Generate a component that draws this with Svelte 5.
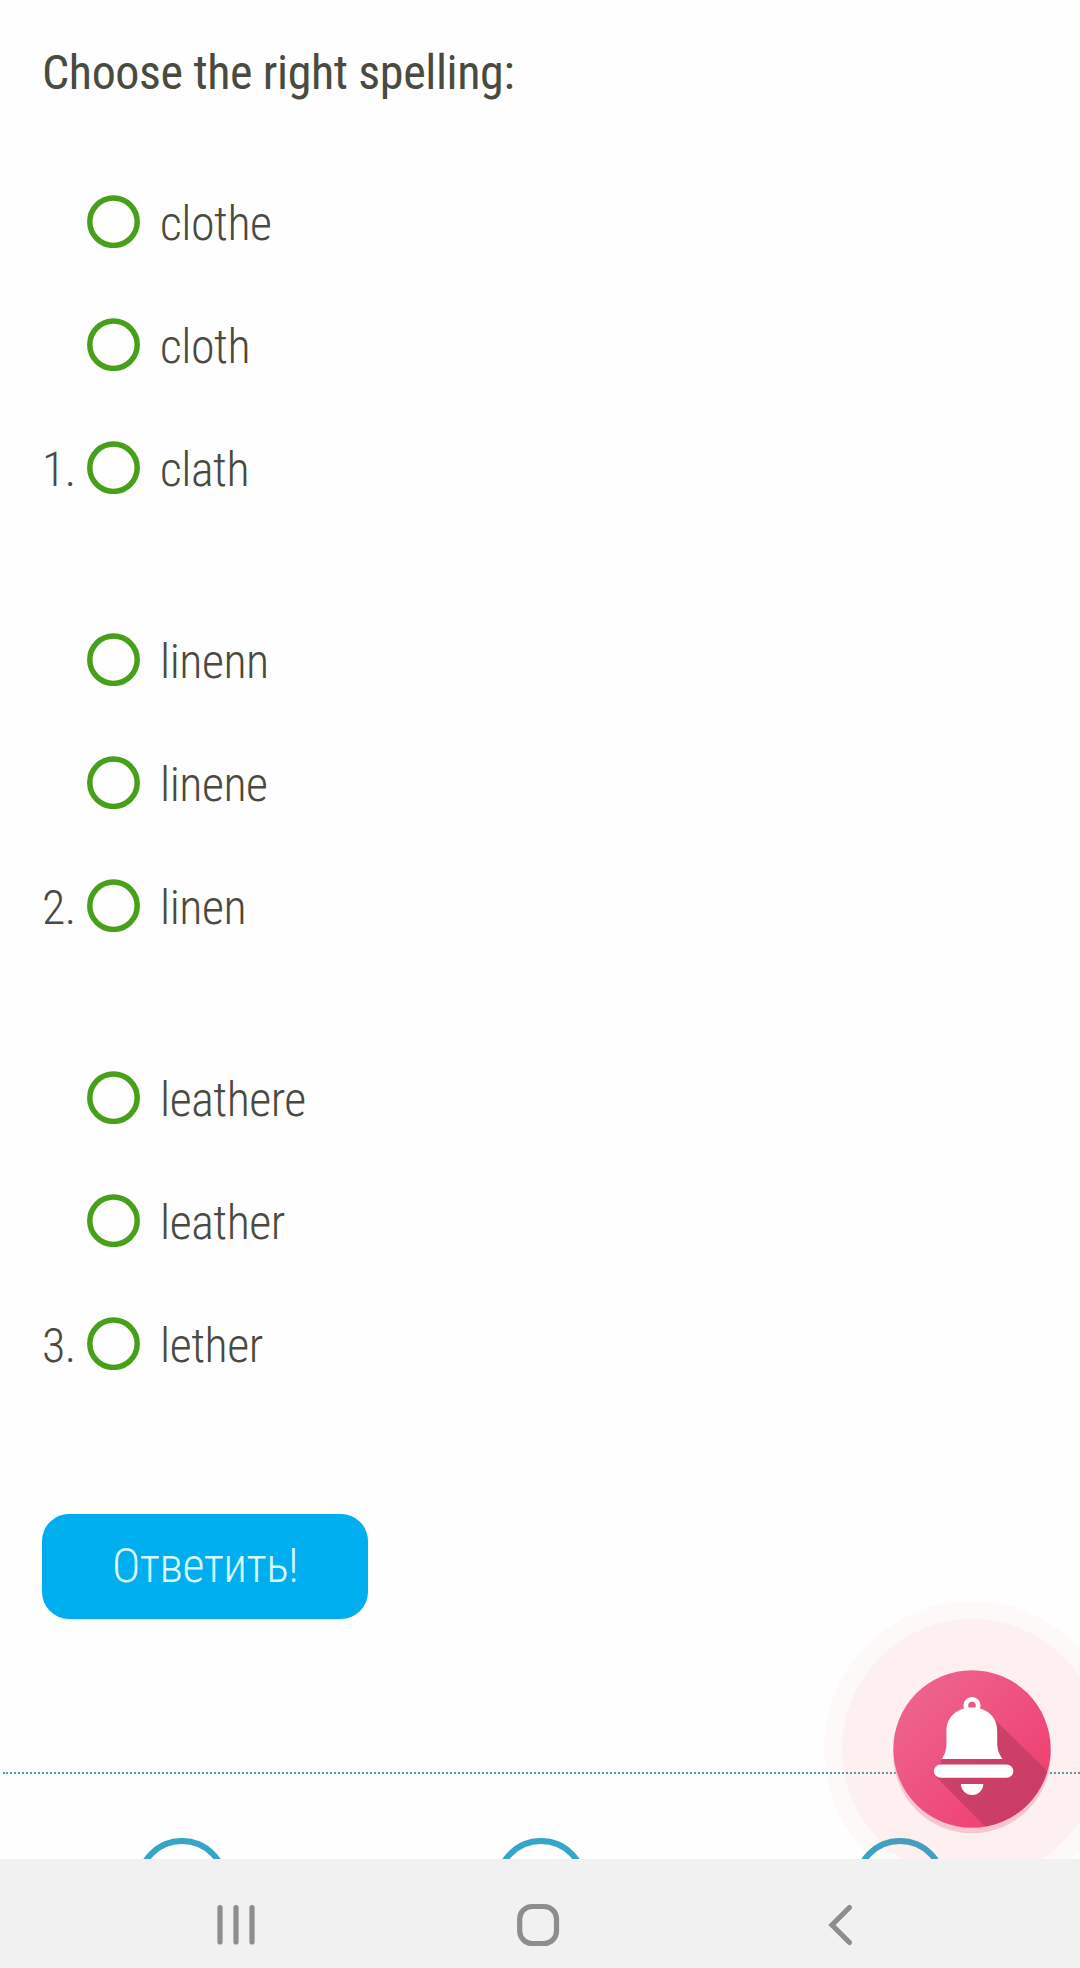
<script>
  const questions = [
    { number: 1, options: ['clothe', 'cloth', 'clath'] },
    { number: 2, options: ['linenn', 'linene', 'linen'] },
    { number: 3, options: ['leathere', 'leather', 'lether'] }
  ];
</script>

<div class="screen">
  <main>
    <h1>Choose the right spelling:</h1>

    <div class="quiz">
      {#each questions as question}
        <section class="question">
          <span class="number">{question.number}.</span>
          <div class="options">
            {#each question.options as option}
              <div class="option">
                <svg class="radio" viewBox="0 0 53 53">
                  <circle cx="26.500" cy="26.700" r="23.700" />
                </svg>
                <span class="word">{option}</span>
              </div>
            {/each}
          </div>
        </section>
      {/each}
    </div>

    <button type="button">Ответить!</button>

    <div class="divider"></div>
    <div class="links">
      <span class="ring"></span>
      <span class="ring"></span>
      <span class="ring"></span>
    </div>

    <svg class="bell" viewBox="0 0 296 296" aria-label="Notifications">
      <defs>
        <linearGradient id="disc" x1="0" y1="0" x2="1" y2="1">
          <stop offset="0.1" stop-color="#ee658e" />
          <stop offset="0.85" stop-color="#ef3f71" />
        </linearGradient>
        <clipPath id="disc-clip"><circle cx="148" cy="148" r="78.7" /></clipPath>
      </defs>
      <circle cx="148" cy="148" r="148" fill="#ff506e" opacity="0.03" />
      <circle cx="148" cy="148" r="130" fill="#f8506e" opacity="0.06" />
      <circle cx="148" cy="153.5" r="78.7" fill="#f8c5d0" />
      <circle cx="148" cy="148" r="78.7" fill="url(#disc)" />
      <path d="M172 120 L222.500 169 L240 245 L162 226 L112 176 L118 158 Z" fill="#be3c60" opacity="0.72" clip-path="url(#disc-clip)" />
      <circle cx="148" cy="104.5" r="6.2" fill="none" stroke="#fff" stroke-width="4.8" />
      <path d="M118 158 C121.500 152 122.500 148 122.500 142 V130 C122.500 115 134 106.500 148 106.500 C162 106.500 173.200 115 173.200 130 V142 C173.200 148 174.500 152 178.500 158 Z" fill="#fff" />
      <rect x="110" y="163.500" width="79.300" height="13.300" rx="6.600" fill="#fff" />
      <path d="M137 183 H159.300 A11.150 11 0 0 1 137 183 Z" fill="#fff" />
    </svg>
  </main>

  <nav>
    <svg viewBox="0 0 1080 109" fill="none" stroke="#8d8d8d" stroke-width="5.200" stroke-linecap="round">
      <path d="M220 48.500 V83 M236 48.500 V83 M252 48.500 V83" />
      <rect x="519.700" y="47.500" width="36.800" height="37" rx="12.500" />
      <path d="M849.500 48.500 L832 66 L849.500 83.500" stroke-linejoin="miter" />
    </svg>
  </nav>
</div>

<style>
  :global(body) {
    margin: 0;
    background: #fefefe;
  }

  .screen {
    width: 1080px;
    height: 1968px;
    display: flex;
    flex-direction: column;
    overflow: hidden;
    font-family: 'Roboto Condensed', Roboto, sans-serif;
    font-stretch: 75%;
    font-size: 48px;
    font-weight: 300;
    letter-spacing: -0.5px;
    color: #4a4a40;
  }

  main {
    position: relative;
    box-sizing: border-box;
    height: 1859px;
    padding-top: 43px;
    overflow: hidden;
    background: #fefefe;
  }

  h1 {
    margin: 0 42px;
    font-size: 48px;
    line-height: 60px;
    font-weight: 400;
    letter-spacing: -0.37px;
    white-space: nowrap;
  }

  .quiz {
    display: flex;
    flex-direction: column;
    gap: 69px;
    margin: 57px 42px 0;
  }

  .question {
    display: flex;
    align-items: flex-end;
  }

  .number {
    width: 45px;
    padding-top: 5px;
    line-height: 118px;
    white-space: nowrap;
  }

  .option {
    display: flex;
    align-items: center;
    height: 123px;
    gap: 20px;
  }

  .radio {
    width: 53px;
    height: 53px;
    fill: none;
    stroke: #46a01a;
    stroke-width: 5.500px;
  }

  .word {
    padding-top: 5px;
    line-height: 118px;
  }

  button {
    display: block;
    width: 326px;
    height: 105px;
    margin: 109px 0 0 42px;
    padding: 0 0 2px;
    border: 0;
    border-radius: 27px;
    background: #00adef;
    color: #d8fbff;
    font: inherit;
    letter-spacing: -0.5px;
  }

  .divider {
    margin: 153px 0 0 3px;
    border-top: 2px dotted #4f9daa;
  }

  .links {
    display: grid;
    grid-template-columns: repeat(3, 359px);
    justify-items: center;
    margin: 64px 0 0 2px;
  }

  .ring {
    box-sizing: border-box;
    width: 92px;
    height: 92px;
    border: 6px solid #35a5c9;
    border-radius: 50%;
  }

  .bell {
    position: absolute;
    left: 823.700px;
    top: 1601.300px;
    width: 296px;
    height: 296px;
  }

  nav {
    height: 109px;
    background: #f1f1f1;
  }

  nav svg {
    display: block;
    width: 1080px;
    height: 109px;
  }
</style>
